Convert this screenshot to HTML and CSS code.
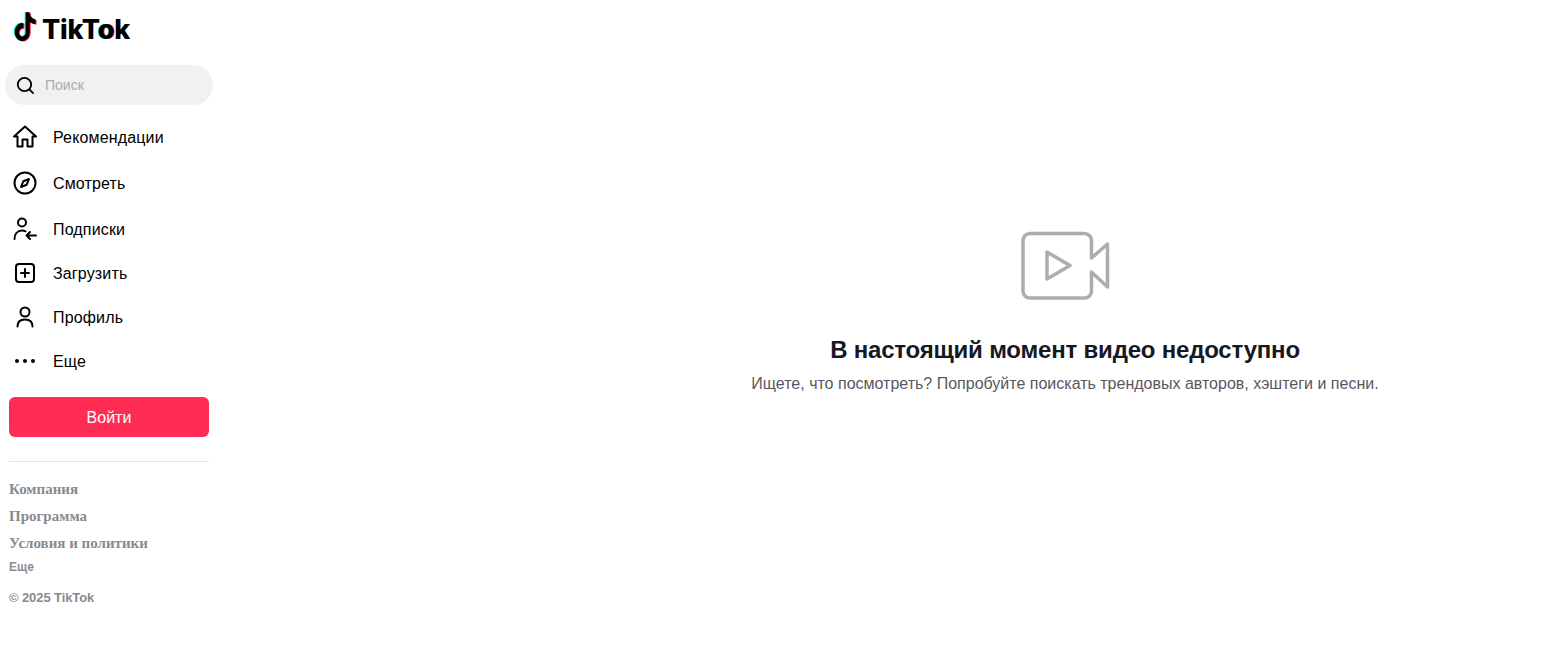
FILE: index.html
```html
<!DOCTYPE html>
<html lang="ru">
<head>
  <meta charset="UTF-8">
  <title>TikTok</title>
  <link rel="stylesheet" href="styles.css">
</head>
<body>
  <aside class="sidebar">
    <div class="logo">
      <svg class="logo-mark" viewBox="0 0 24 24" width="25" height="30" preserveAspectRatio="none">
        <defs>
          <path id="note" d="M12.525.02c1.31-.02 2.61-.01 3.91-.02.08 1.53.63 3.09 1.75 4.17 1.12 1.11 2.7 1.62 4.24 1.79v4.03c-1.44-.05-2.89-.35-4.2-.97-.57-.26-1.1-.59-1.62-.93-.01 2.92.01 5.84-.02 8.75-.08 1.4-.54 2.79-1.35 3.94-1.31 1.92-3.58 3.17-5.91 3.21-1.43.08-2.86-.31-4.08-1.03-2.02-1.19-3.44-3.37-3.65-5.71-.02-.5-.03-1-.01-1.49.18-1.9 1.12-3.72 2.58-4.96 1.66-1.44 3.98-2.13 6.15-1.72.02 1.48-.04 2.96-.04 4.44-.99-.32-2.15-.23-3.02.37-.63.41-1.11 1.04-1.36 1.75-.21.51-.15 1.07-.14 1.61.24 1.64 1.82 3.02 3.5 2.87 1.12-.01 2.19-.66 2.77-1.61.19-.33.4-.67.41-1.06.1-1.79.06-3.57.07-5.36.01-4.03-.01-8.05.02-12.07z"/>
        </defs>
        <use href="#note" fill="#25f4ee" transform="translate(-0.9 -0.3) scale(.96)"/>
        <use href="#note" fill="#fe2c55" transform="translate(1.1 0.6) scale(.96)"/>
        <use href="#note" fill="#000" transform="translate(0.1 0.2) scale(.96)"/>
      </svg>
      <span class="logo-text">TikT<span class="logo-o">o</span>k</span>
    </div>

    <div class="search">
      <svg class="search-icon" viewBox="0 0 20 20" width="20" height="20" fill="none" stroke="#000" stroke-width="1.8" stroke-linecap="round">
        <circle cx="9.5" cy="9.5" r="6.7"/>
        <path d="M14.5 14.5l3.6 3.6"/>
      </svg>
      <span class="search-text">Поиск</span>
    </div>

    <nav class="nav">
      <a class="nav-item nav-item-spaced">
        <svg viewBox="0 0 28 28" width="28" height="28" fill="none" stroke="#000" stroke-width="2" stroke-linejoin="round">
          <path d="M3 13.500L14 3.500l11 10h-3.500v10h-5v-7h-5v7h-5V13.500z"/>
        </svg>
        <span class="nav-label">Рекомендации</span>
      </a>
      <a class="nav-item nav-item-spaced">
        <svg viewBox="0 0 28 28" width="28" height="28" fill="none" stroke="#000" stroke-width="2">
          <circle cx="14" cy="14" r="10.500"/>
          <path d="M18 10L15.700 15.700 10 18 12.300 12.300z" stroke-width="2" stroke-linejoin="round"/>
        </svg>
        <span class="nav-label">Смотреть</span>
      </a>
      <a class="nav-item nav-item-spaced">
        <svg viewBox="0 0 28 28" width="28" height="28" fill="none" stroke="#000" stroke-width="2" stroke-linecap="round" stroke-linejoin="round">
          <circle cx="11" cy="7.500" r="4"/>
          <path d="M3.500 24c0-5 3-8.500 7.500-8.500 1.500 0 2.500.3 3.500.8"/>
          <path d="M25 20.500H15.500M19 17l-3.500 3.500L19 24"/>
        </svg>
        <span class="nav-label">Подписки</span>
      </a>
      <a class="nav-item">
        <svg viewBox="0 0 28 28" width="28" height="28" fill="none" stroke="#000" stroke-width="2" stroke-linecap="round">
          <rect x="5" y="5" width="18" height="18" rx="3"/>
          <path d="M14 10v8M10 14h8"/>
        </svg>
        <span class="nav-label">Загрузить</span>
      </a>
      <a class="nav-item">
        <svg viewBox="0 0 28 28" width="28" height="28" fill="none" stroke="#000" stroke-width="2" stroke-linecap="round">
          <circle cx="14" cy="9" r="4.500"/>
          <path d="M6.500 23.500c0-4.500 3-7 7.500-7s7.500 2.500 7.500 7"/>
        </svg>
        <span class="nav-label">Профиль</span>
      </a>
      <a class="nav-item">
        <svg viewBox="0 0 28 28" width="28" height="28" fill="#000">
          <circle cx="6" cy="14" r="2"/>
          <circle cx="14" cy="14" r="2"/>
          <circle cx="22" cy="14" r="2"/>
        </svg>
        <span class="nav-label">Еще</span>
      </a>
    </nav>

    <button class="login">Войти</button>

    <div class="divider"></div>

    <footer class="links">
      <a class="link-main">Компания</a>
      <a class="link-main">Программа</a>
      <a class="link-main">Условия и политики</a>
      <a class="link-small">Еще</a>
      <span class="copyright">© 2025 TikTok</span>
    </footer>
  </aside>

  <main class="content">
    <svg class="empty-icon" viewBox="0 0 90 70" width="90" height="70" fill="none" stroke="#adadaf" stroke-width="3.500" stroke-linejoin="round" stroke-linecap="round">
      <path d="M71.500 27V9.500a7 7 0 0 0-7-7H10a7 7 0 0 0-7 7V60a7 7 0 0 0 7 7h54.500a7 7 0 0 0 7-7V41L87.500 56V13z"/>
      <path d="M27 21v27L50 34.500z"/>
    </svg>
    <h1 class="empty-title">В настоящий момент видео недоступно</h1>
    <p class="empty-text">Ищете, что посмотреть? Попробуйте поискать трендовых авторов, хэштеги и песни.</p>
  </main>
</body>
</html>
```

FILE: styles.css
```css
* {
  box-sizing: border-box;
  margin: 0;
  padding: 0;
}

body {
  display: flex;
  height: 100vh;
  background: #fff;
  color: #000;
  font-family: 'Liberation Sans', Arial, sans-serif;
  overflow: hidden;
}

.sidebar {
  width: 218px;
  flex-shrink: 0;
  padding-top: 12px;
}

.logo {
  display: flex;
  align-items: center;
  gap: 4px;
  height: 30px;
  margin-left: 13px;
}

.logo-mark {
  flex-shrink: 0;
}

.logo-text {
  font-family: Inter, sans-serif;
  font-size: 27px;
  font-weight: 800;
  letter-spacing: -0.2px;
  line-height: 30px;
  margin-top: 6px;
}

.logo-o {
  text-shadow: -1px 0 0 #25f4ee, 1px 0 0 #fe2c55;
}

.search {
  display: flex;
  align-items: center;
  gap: 10px;
  width: 208px;
  height: 40px;
  margin: 23px 0 10px 5px;
  padding-left: 10px;
  background: #f1f1f2;
  border-radius: 20px;
}

.search-text {
  font-size: 14px;
  color: #a8abb0;
}

.nav-item {
  display: flex;
  align-items: center;
  gap: 14px;
  height: 44px;
  padding-left: 11px;
  font-size: 16px;
  color: #000;
}

.nav-label {
  padding-top: 2px;
  letter-spacing: 0.15px;
}

.nav-item-spaced {
  margin-bottom: 2px;
}

.nav-item-spaced:nth-child(3) {
  margin-bottom: 0;
}

.login {
  display: block;
  width: 200px;
  height: 40px;
  margin: 14px 0 24px 9px;
  padding-top: 2px;
  background: #fe2c55;
  border: none;
  border-radius: 6px;
  color: #fff;
  font-family: inherit;
  font-size: 16px;
}

.divider {
  width: 200px;
  height: 1px;
  margin-left: 9px;
  background: #e3e3e4;
}

.links {
  display: flex;
  flex-direction: column;
  align-items: flex-start;
  margin: 19px 0 0 9px;
  color: #8a8a8e;
}

.link-main {
  font-family: 'Liberation Serif', serif;
  font-size: 15px;
  font-weight: 700;
  line-height: 16px;
  margin-bottom: 11px;
}

.link-small {
  font-size: 12px;
  font-weight: 700;
  line-height: 14px;
  margin-top: -2px;
}

.copyright {
  font-size: 13px;
  font-weight: 700;
  letter-spacing: -0.1px;
  line-height: 14px;
  margin-top: 17px;
}

.content {
  flex: 1;
  display: flex;
  flex-direction: column;
  align-items: center;
  padding: 231px 0 0 357px;
}

.empty-icon {
  margin-bottom: 33px;
}

.empty-title {
  font-size: 24px;
  font-weight: 700;
  letter-spacing: -0.2px;
  line-height: 32px;
  color: #161823;
}

.empty-text {
  margin-top: 8px;
  font-size: 16px;
  line-height: 20px;
  color: #57585f;
}
```
